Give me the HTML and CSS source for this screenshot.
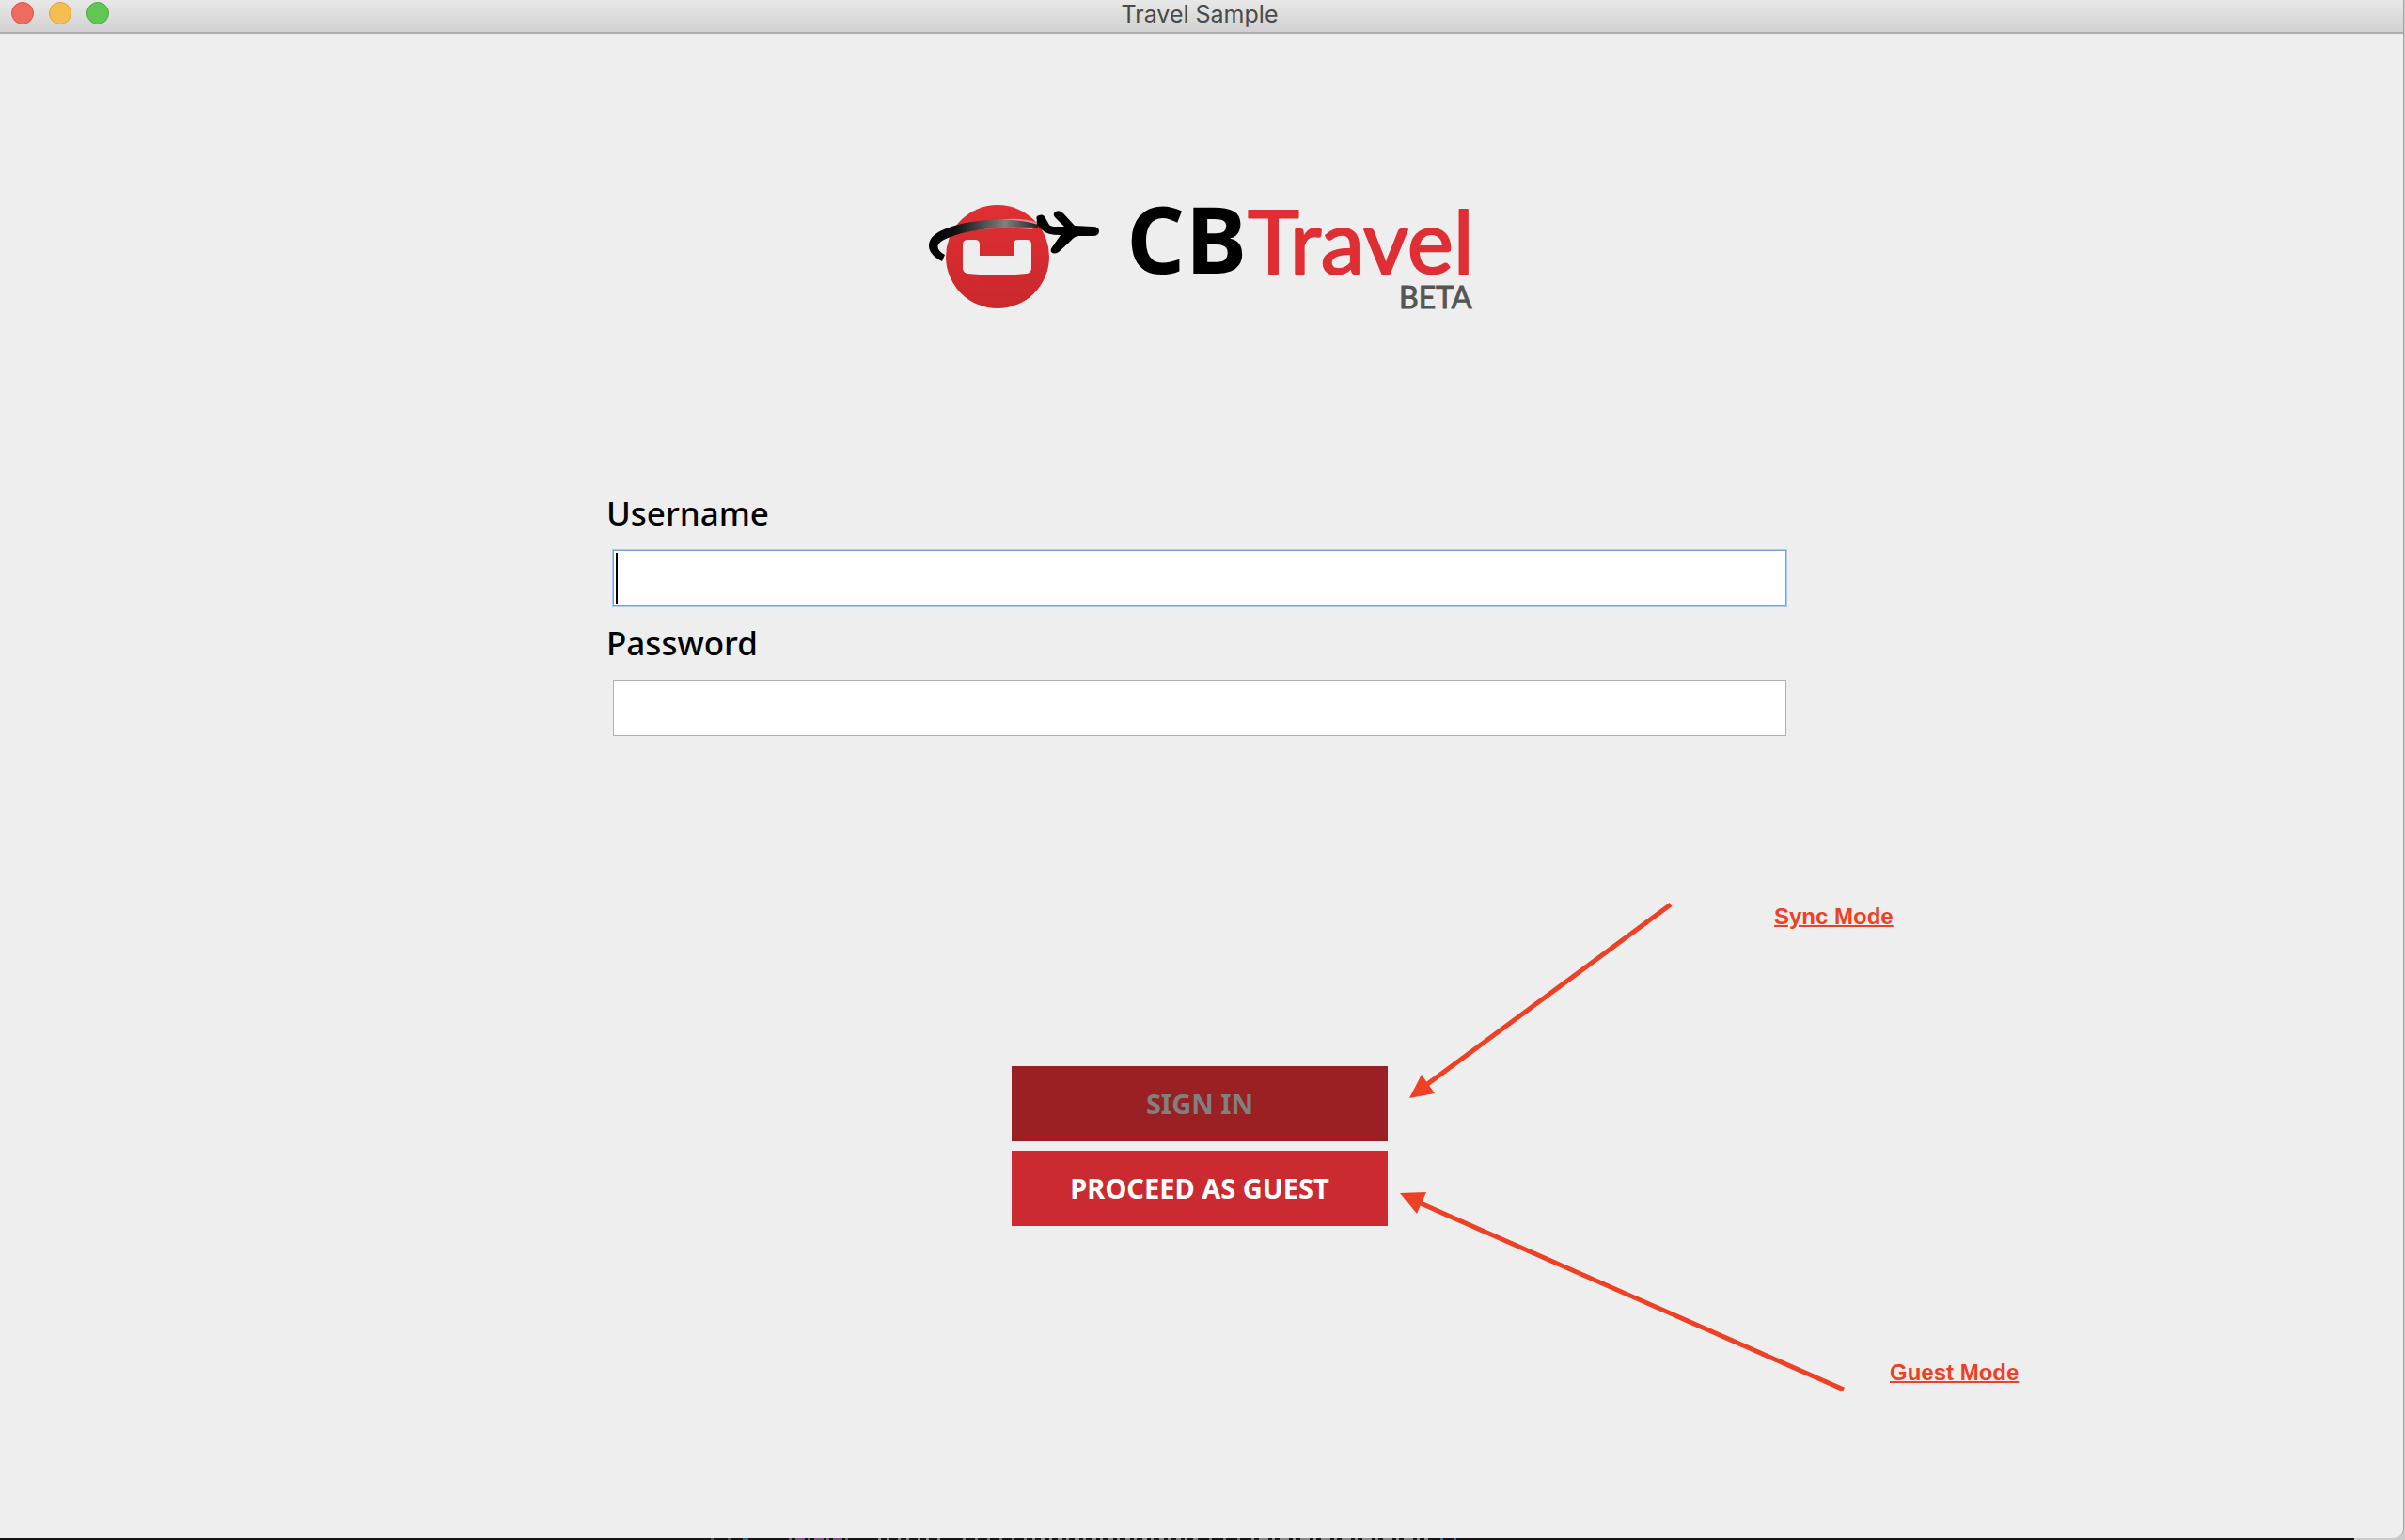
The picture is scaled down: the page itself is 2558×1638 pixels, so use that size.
FILE: index.html
```html
<!DOCTYPE html>
<html lang="en">
<head>
<meta charset="utf-8">
<title>Travel Sample</title>
<link rel="stylesheet" href="styles.css">
</head>
<body>
<div class="window">
  <header class="titlebar">
    <div class="lights">
      <button class="light close" aria-label="Close"></button>
      <button class="light minimize" aria-label="Minimize"></button>
      <button class="light zoom" aria-label="Zoom"></button>
    </div>
    <h1 class="title">Travel Sample</h1>
  </header>
  <main class="content">
    <svg class="logo" viewBox="0 0 584 128" role="img" aria-label="CBTravel Beta">
      <defs>
        <linearGradient id="trail" x1="0" x2="1" y1="0" y2="0">
          <stop offset="0" stop-color="#000"/>
          <stop offset=".25" stop-color="#111"/>
          <stop offset=".7" stop-color="#808080"/>
          <stop offset="1" stop-color="#222"/>
        </linearGradient>
        <linearGradient id="ball" x1="0" x2="0" y1="0" y2="1">
          <stop offset="0" stop-color="#e02f33"/>
          <stop offset="1" stop-color="#c9282d"/>
        </linearGradient>
      </defs>
      <circle cx="77" cy="61" r="55" fill="url(#ball)"/>
      <path d="M46 43h7q5 0 5 5v12h36V48q0-5 5-5h9q5 0 5 5v25q0 5-5 6-31 3-63 0-5-1-5-6V48q0-5 6-5z" fill="#eee"/>
      <path d="M32 33Q54 23 88 21q18-1 32 4l-6 7q-34-3-62 1-14 2-28 8z" fill="#e08a8b"/>
      <path d="M18 66C-2 56 0 40 20 32 48 20 96 19 120 27v3C92 29 54 30 30 39 11 45 9 52 21 59z" fill="url(#trail)"/>
      <path d="M121 17q5-2 7 3l4 7q2 2 7 2h9l-10-10q-3-4 1-6 4-2 8 2l12 13 19 1q7 0 7 5 0 5-7 5h-15q-5 1-8 5l-13 12q-5 3-8 0-1-3 1-5l9-13q-15 0-19-5-8-6-6-11-2-4 2-5z" fill="#000"/>
      <text class="logo-cb" x="214" y="79">CB</text>
      <text class="logo-travel" x="343" y="79">Travel</text>
      <text class="logo-beta" x="504" y="116">BETA</text>
    </svg>

    <form class="login">
      <div class="fields">
        <label class="label" for="username">Username</label>
        <input class="field active" id="username" type="text">
        <label class="label" for="password">Password</label>
        <input class="field" id="password" type="password">
      </div>
      <div class="actions">
        <button class="button" type="submit" disabled>SIGN IN</button>
        <button class="button" type="button">PROCEED AS GUEST</button>
        <svg class="arrows" viewBox="0 0 474 520" aria-hidden="true">
          <path d="M288 2 28 194M472 518 22 320" stroke="#ee4025" stroke-width="5" fill="none"/>
          <path d="M10 208 23 183 37 203zM0 309 28 308 18 331z" fill="#ee4025"/>
        </svg>
        <a class="note sync" href="#sync">Sync Mode</a>
        <a class="note guest" href="#guest">Guest Mode</a>
      </div>
    </form>
  </main>
</div>
<div class="backdrop">
  <svg class="slivers" width="800" height="2" aria-hidden="true">
    <g fill="none" stroke-width="2">
      <path d="M0 1h22" stroke="#555" stroke-dasharray="3 15"/>
      <path d="M34 1h6" stroke="#2d6684"/>
      <path d="M83 1h64" stroke="#7d4f7c" stroke-dasharray="3 4 10 3"/>
      <path d="M178 1h70" stroke="#888" stroke-dasharray="3 6 3 9"/>
      <path d="M268 1h70" stroke="#777" stroke-dasharray="3 10"/>
      <path d="M342 1h180" stroke="#888" stroke-dasharray="3 6 5 4"/>
      <path d="M530 1h36" stroke="#777" stroke-dasharray="3 12"/>
      <path d="M575 1h188" stroke="#888" stroke-dasharray="3 5 10 4"/>
      <path d="M776 1h20" stroke="#2d6fa0" stroke-dasharray="3 11"/>
    </g>
  </svg>
</div>
</body>
</html>
```
FILE: styles.css
```css
* { box-sizing: border-box; }

body {
  margin: 0;
  min-height: 100vh;
  display: flex;
  flex-direction: column;
  background: #cacaca;
  font-family: "Noto Sans", sans-serif;
  overflow-x: hidden;
}

.window {
  flex: 1;
  display: flex;
  flex-direction: column;
  margin-right: 1px;
  border-right: 1px solid #a4a4a4;
  border-bottom-right-radius: 10px;
  background: #eee;
}

.titlebar {
  display: grid;
  grid-template-columns: 1fr auto 1fr;
  height: 36px;
  padding: 0 16px 0 12px;
  border-bottom: 2px solid #acacac;
  background: linear-gradient(#e8e8e8, #d1d1d1);
}

.lights {
  display: flex;
  gap: 16px;
  padding-top: 2px;
}

.light {
  width: 24px;
  height: 24px;
  padding: 0;
  border: 1px solid;
  border-radius: 50%;
}

.close { background: #ed6b5f; border-color: #dd5348; }
.minimize { background: #f6be50; border-color: #dea036; }
.zoom { background: #62c655; border-color: #4cab3c; }

.title {
  margin: 0;
  color: #4a4a4a;
  font: 400 25px/30px Inter, sans-serif;
}

.content {
  display: flex;
  flex-direction: column;
  align-items: center;
  padding: 176px 28px 40px 24px;
}

.logo {
  width: 584px;
  max-width: 100%;
  overflow: visible;
}

.logo-cb {
  font: 700 98px "Open Sans", sans-serif;
}

.logo-travel {
  fill: #df2f34;
  stroke: #df2f34;
  stroke-width: 2px;
  stroke-linejoin: round;
  font: 400 93px Lato, sans-serif;
}

.logo-beta {
  fill: #555;
  stroke: #555;
  stroke-width: 1px;
  font: 400 32px Lato, sans-serif;
}

.login {
  display: flex;
  flex-direction: column;
  align-items: center;
  width: 100%;
  margin-top: 182px;
}

.fields {
  display: flex;
  flex-direction: column;
  gap: 15px;
  width: 100%;
  max-width: 1262px;
}

.label {
  font-size: 35px;
  font-weight: 500;
  line-height: 48px;
}

.field {
  height: 60px;
  margin: 0 7px;
  padding: 0 8px;
  border: 1px solid #b2b2b2;
  background: #fff;
  font: 35px "Noto Sans", sans-serif;
  outline: none;
}

.field.active {
  border-color: #6fa3dc;
  box-shadow: 0 0 0 1px #a5cdf7;
  background: linear-gradient(#000, #000) 2px 2px / 2px 54px no-repeat #fff;
}

.actions {
  position: relative;
  display: flex;
  flex-direction: column;
  gap: 10px;
  width: 400px;
  margin-top: 351px;
}

.button {
  height: 80px;
  padding: 0;
  border: 0;
  background: #cb2b30;
  color: #fff;
  font: 700 29px/40px "Noto Sans", sans-serif;
}

.button:disabled {
  background: #9a2024;
  color: #808080;
}

/* Callouts drawn over the form, anchored to the buttons */
.arrows {
  position: absolute;
  left: 413px;
  top: -174px;
  width: 474px;
  height: 520px;
  pointer-events: none;
}

.note {
  position: absolute;
  color: #ee4025;
  font: 700 24px/28px "Liberation Sans", sans-serif;
  white-space: nowrap;
  text-decoration-thickness: 2px;
}

.sync { left: 811px; top: -173px; }
.guest { left: 934px; top: 312px; }

.backdrop {
  display: flex;
  height: 2px;
  margin-right: 54px;
  padding-left: 756px;
  background: #151515;
}
```
